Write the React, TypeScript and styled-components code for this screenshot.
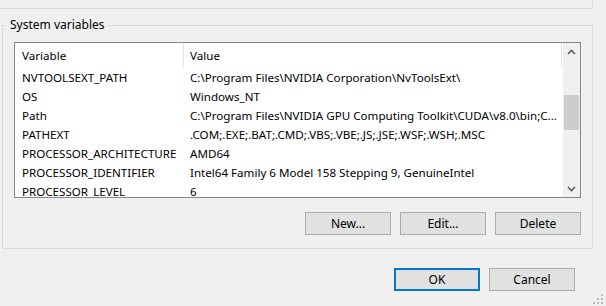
import styled, { createGlobalStyle } from "styled-components";

const GlobalStyle = createGlobalStyle`
  html, body {
    margin: 0;
    padding: 0;
    background: #f0f0f0;
  }
  * {
    box-sizing: border-box;
  }
`;

const Window = styled.div`
  position: relative;
  width: 606px;
  height: 306px;
  overflow: hidden;
  display: flex;
  flex-direction: column;
  background: #f0f0f0;
  font-family: "Segoe UI", "Noto Sans", sans-serif;
  font-size: 11.6px;
  color: #000;
`;

const TopGroup = styled.div`
  width: 593px;
  height: 9px;
  border-right: 1px solid #dcdcdc;
  border-bottom: 1px solid #dcdcdc;
`;

const Group = styled.fieldset`
  width: 591px;
  margin: 8px 0 0 2px;
  padding: 9px 11px 13px 11px;
  border: 1px solid #dcdcdc;
  min-width: 0;
`;

const GroupLabel = styled.legend`
  margin-left: -8px;
  padding: 0 3px 0 4px;
  line-height: 16px;
  font-size: 12px;
`;

const ListView = styled.div`
  display: flex;
  width: 567px;
  height: 156px;
  border: 1px solid #828790;
  background: #fff;
`;

const ListBody = styled.div`
  flex: 1;
  overflow: hidden;
`;

const HeaderRow = styled.div`
  display: flex;
  height: 25px;
`;

const HeaderCell = styled.div<{ $width: number; $pad: number }>`
  width: ${(p) => p.$width}px;
  padding-left: ${(p) => p.$pad}px;
  line-height: 25px;
  border-right: 1px solid #e5e5e5;
`;

const Row = styled.div`
  display: flex;
  height: 19px;
  line-height: 19px;
  white-space: nowrap;
`;

const Cell = styled.div<{ $width: number; $pad: number }>`
  width: ${(p) => p.$width}px;
  padding-left: ${(p) => p.$pad}px;
  overflow: hidden;
`;

const ScrollBar = styled.div`
  width: 17px;
  display: flex;
  flex-direction: column;
  align-items: center;
  background: #f0f0f0;
`;

const ArrowButton = styled.div`
  width: 17px;
  height: 17px;
  display: flex;
  align-items: center;
  justify-content: center;
`;

const Thumb = styled.div<{ $top: number; $height: number }>`
  width: 15px;
  height: ${(p) => p.$height}px;
  margin-top: ${(p) => p.$top}px;
  background: #cdcdcd;
`;

const Spacer = styled.div`
  flex: 1;
`;

const ButtonRow = styled.div<{ $gap: number }>`
  display: flex;
  justify-content: flex-end;
  gap: ${(p) => p.$gap}px;
`;

const GroupButtons = styled(ButtonRow)`
  margin-top: 14px;
`;

const DialogButtons = styled(ButtonRow)`
  margin: 19px 31px 0 0;
`;

const Button = styled.button<{ $primary?: boolean }>`
  width: 86px;
  height: 23px;
  padding: 0;
  font: inherit;
  font-size: 12px;
  color: #000;
  background: #e1e1e1;
  border: ${(p) => (p.$primary ? "2px solid #0078d7" : "1px solid #adadad")};
`;

const Grip = styled.svg`
  position: absolute;
  right: 2px;
  bottom: 1px;
`;

const rows: [string, string][] = [
  ["NVTOOLSEXT_PATH", "C:\\Program Files\\NVIDIA Corporation\\NvToolsExt\\"],
  ["OS", "Windows_NT"],
  ["Path", "C:\\Program Files\\NVIDIA GPU Computing Toolkit\\CUDA\\v8.0\\bin;C..."],
  ["PATHEXT", ".COM;.EXE;.BAT;.CMD;.VBS;.VBE;.JS;.JSE;.WSF;.WSH;.MSC"],
  ["PROCESSOR_ARCHITECTURE", "AMD64"],
  ["PROCESSOR_IDENTIFIER", "Intel64 Family 6 Model 158 Stepping 9, GenuineIntel"],
  ["PROCESSOR_LEVEL", "6"],
];

function Chevron({ up }: { up?: boolean }) {
  return (
    <svg width="9" height="6" viewBox="0 0 9 6">
      <polyline
        points={up ? "1,5 4.5,1.5 8,5" : "1,1 4.5,4.5 8,1"}
        fill="none"
        stroke="#606060"
        strokeWidth="1.6"
      />
    </svg>
  );
}

export default function App() {
  return (
    <Window>
      <GlobalStyle />
      <TopGroup />
      <Group>
        <GroupLabel>System variables</GroupLabel>
        <ListView>
          <ListBody>
            <HeaderRow>
              <HeaderCell $width={169} $pad={7}>
                Variable
              </HeaderCell>
              <HeaderCell $width={378} $pad={6}>
                Value
              </HeaderCell>
            </HeaderRow>
            {rows.map(([name, value]) => (
              <Row key={name}>
                <Cell $width={169} $pad={7}>
                  {name}
                </Cell>
                <Cell $width={378} $pad={6}>
                  {value}
                </Cell>
              </Row>
            ))}
          </ListBody>
          <ScrollBar>
            <ArrowButton>
              <Chevron up />
            </ArrowButton>
            <Thumb $top={35} $height={35} />
            <Spacer />
            <ArrowButton>
              <Chevron />
            </ArrowButton>
          </ScrollBar>
        </ListView>
        <GroupButtons $gap={9}>
          <Button>New...</Button>
          <Button>Edit...</Button>
          <Button>Delete</Button>
        </GroupButtons>
      </Group>
      <DialogButtons $gap={9}>
        <Button $primary>OK</Button>
        <Button>Cancel</Button>
      </DialogButtons>
      <Grip width="11" height="11" viewBox="0 0 11 11">
        {[
          [8, 0],
          [4, 4],
          [8, 4],
          [0, 8],
          [4, 8],
          [8, 8],
        ].map(([x, y]) => (
          <rect key={`${x}-${y}`} x={x} y={y} width="2" height="2" fill="#bcbcbc" />
        ))}
      </Grip>
    </Window>
  );
}
